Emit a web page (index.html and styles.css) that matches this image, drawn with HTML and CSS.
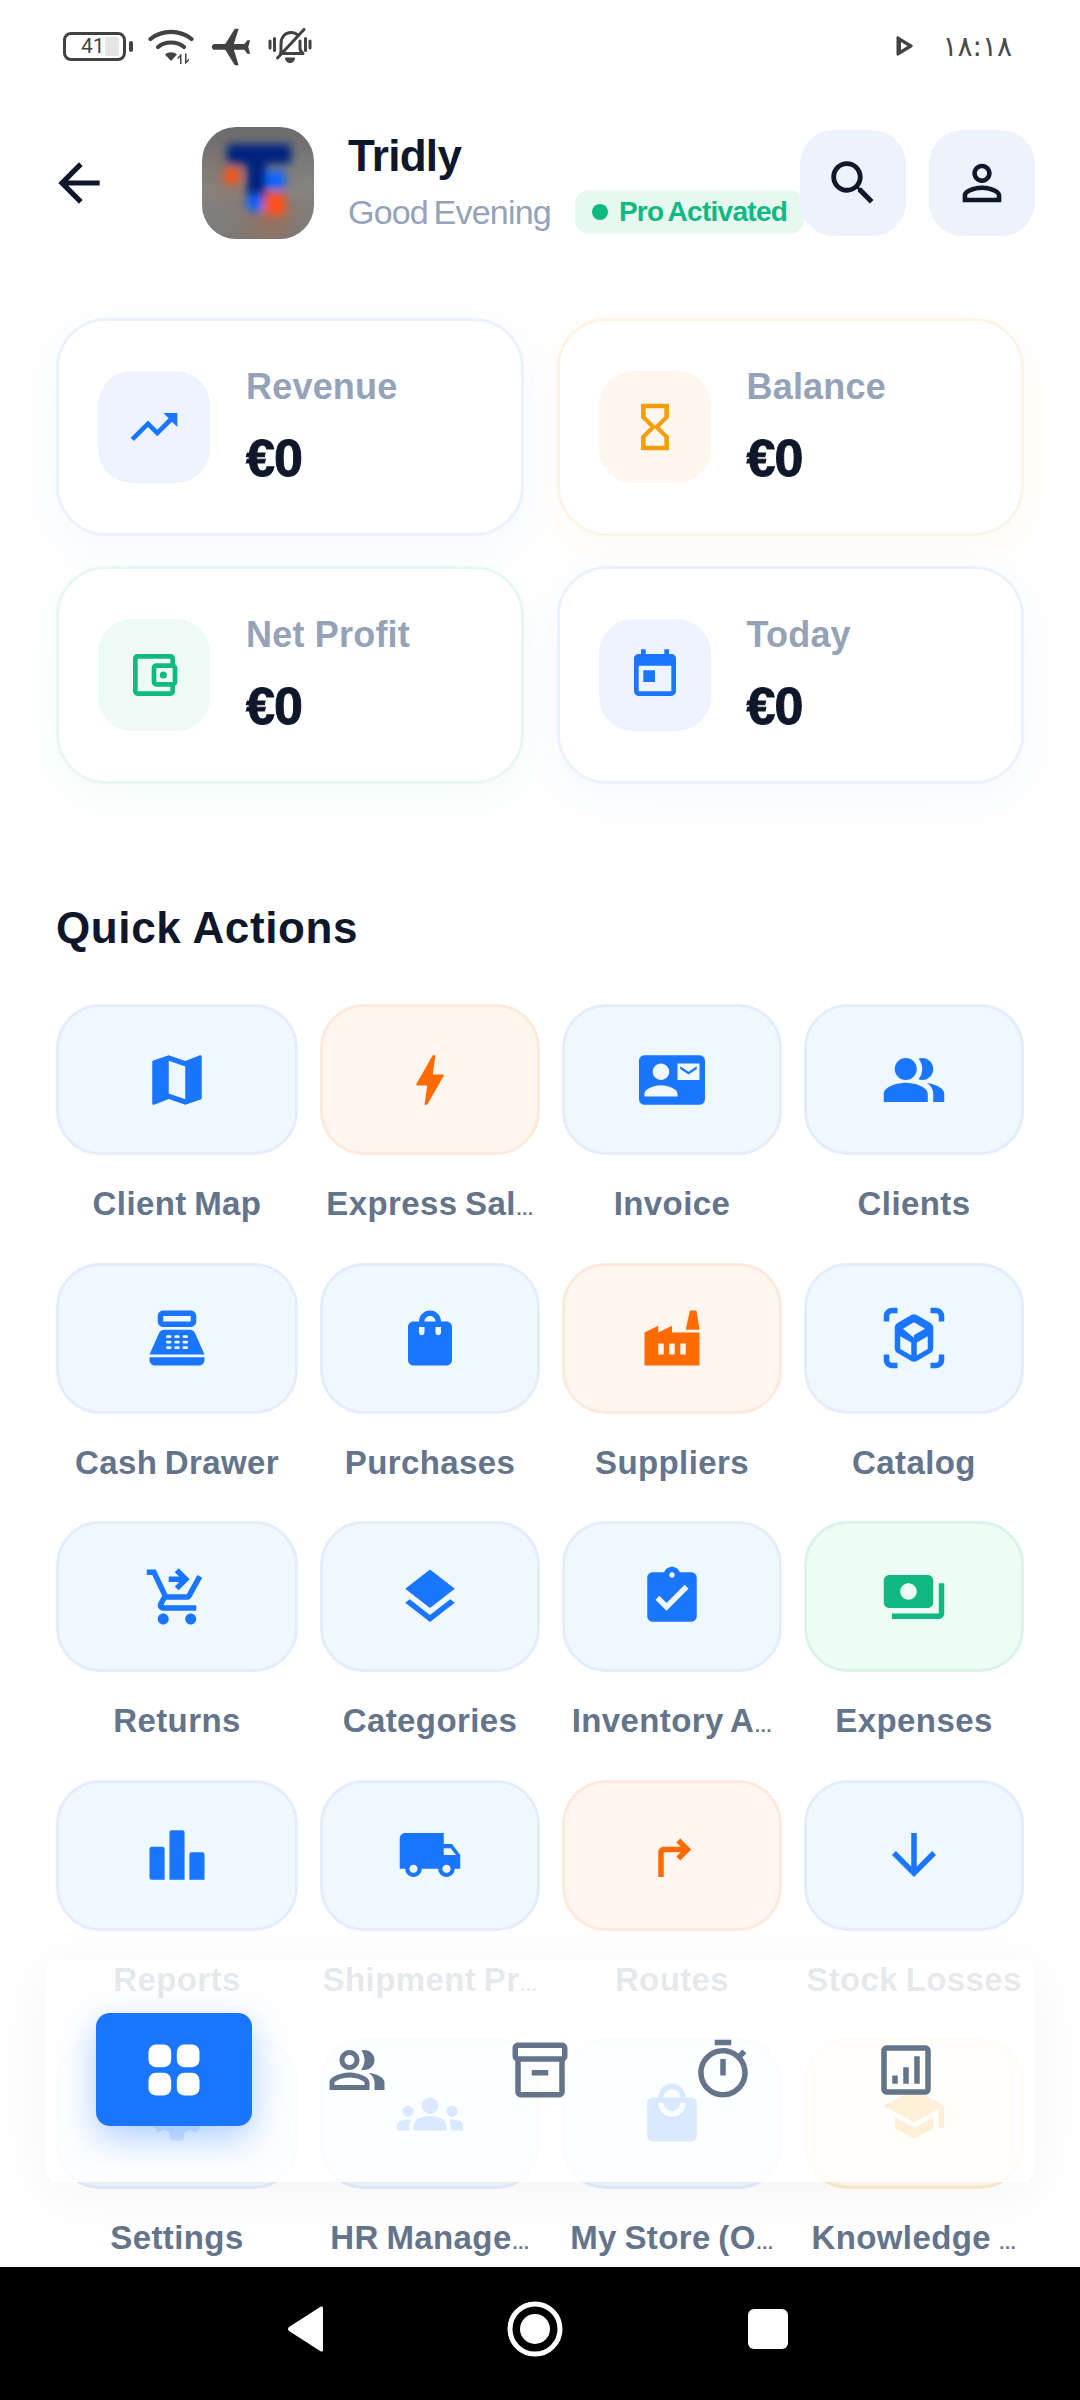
FILE: index.html
```html
<!DOCTYPE html>
<html lang="en">
<head>
    <meta charset="UTF-8">
    <meta name="viewport" content="width=device-width, initial-scale=1.0">
    <title>Tridly</title>
    <link rel="stylesheet" href="styles.css">
</head>
<body>
    <div class="screen">
        <!-- Status bar -->
        <div class="status-bar">
            <div class="status-left">
                <div class="battery"><span class="battery-fill"></span><span class="battery-num">41</span></div>
                <svg class="st-wifi" viewBox="0 0 46 36"><g fill="none" stroke="currentColor" stroke-width="4.200" stroke-linecap="round"><path d="M2.500 11C14 1.500 32 1.500 43.500 11"/><path d="M10 19C17 13 29 13 36 19"/></g><path d="M17 26.500C20.500 23.500 25.500 23.500 29 26.500L23 33Z"/><path d="M32 36v-7l-2.500 2.500V29.500L33.500 25.500V36zM37 25.500h1.500V33L41 30.500V32.500L37 36.500z"/></svg>
                <svg class="st-plane" viewBox="0 0 24 24"><path d="M21 16v-2l-8-5V3.500c0-.83-.67-1.500-1.500-1.500S10 2.670 10 3.500V9l-8 5v2l8-2.500V19l-2 1.500V22l3.500-1 3.500 1v-1.500L13 19v-5.500l8 2.500z" transform="rotate(-90 12 12)"/></svg>
                <svg class="st-bell" viewBox="0 0 44 36"><g fill="none" stroke="currentColor" stroke-width="3" stroke-linecap="round" stroke-linejoin="round"><path d="M13 24.500V16C13 9 17 4.500 23 4.500c3 0 5.500 1 7 3"/><path d="M32 13v7c0 2.500 1 4 3 5.500H12.500"/><path d="M36 1.500 9.500 30"/><path d="M2 13v7M6.500 10.500v12M37.500 10.500v12M42 13v7"/></g><path d="M17 29.500h10c0 3-2 5.500-5 5.500s-5-2.500-5-5.500z"/></svg>
            </div>
            <div class="status-right">
                <svg class="st-play" viewBox="0 0 17 20"><path d="M0.500 1.500C0.500 .5 1.500 0 2.400 .5L16 8.800c1 .6 1 1.800 0 2.400L2.400 19.500C1.500 20 .5 19.500 .5 18.500z"/><path d="M5 6 11.500 10 5 14z" fill="#fff"/></svg>
                <span class="clock">۱۸:۱۸</span>
            </div>
        </div>

        <!-- Header -->
        <div class="header">
            <svg class="back" viewBox="0 0 24 24"><path d="M20 11H7.830l5.590-5.590L12 4l-8 8 8 8 1.410-1.410L7.830 13H20v-2z"/></svg>
            <svg class="logo" viewBox="0 0 112 112">
                <defs>
                    <filter id="soft" x="-30%" y="-30%" width="160%" height="160%"><feGaussianBlur stdDeviation="4"/></filter>
                    <filter id="softer" x="-60%" y="-60%" width="220%" height="220%"><feGaussianBlur stdDeviation="14"/></filter>
                    <linearGradient id="logo-bg" x1="0" y1="0" x2="0" y2="1">
                        <stop offset="0" stop-color="#6b6b6d"/>
                        <stop offset="0.55" stop-color="#858583"/>
                        <stop offset="1" stop-color="#7c7a78"/>
                    </linearGradient>
                </defs>
                <rect width="112" height="112" fill="url(#logo-bg)"/>
                <circle cx="68" cy="90" r="22" fill="#b2603a" opacity="0.55" filter="url(#softer)"/>
                <circle cx="30" cy="50" r="18" fill="#b2603a" opacity="0.45" filter="url(#softer)"/>
                <g filter="url(#soft)">
                    <rect x="25" y="17" width="64" height="20" rx="3" fill="#04247f"/>
                    <rect x="45" y="30" width="19" height="42" fill="#04247f"/>
                    <circle cx="53" cy="76" r="9" fill="#0d62ff"/>
                    <rect x="64" y="44" width="19" height="18" rx="2" fill="#0a63ff"/>
                    <circle cx="30" cy="49" r="8" fill="#ff5210"/>
                    <rect x="63" y="66" width="20" height="22" rx="4" fill="#ff4f14"/>
                </g>
            </svg>
            <div class="brand">
                <div class="brand-name">Tridly</div>
                <div class="brand-sub">
                    <span class="greeting">Good Evening</span>
                    <span class="pro-badge"><span class="pro-dot"></span>Pro Activated</span>
                </div>
            </div>
            <div class="head-btn">
                <svg viewBox="0 0 24 24"><path d="M15.500 14h-.79l-.28-.27C15.410 12.590 16 11.110 16 9.500 16 5.910 13.090 3 9.500 3S3 5.910 3 9.500 5.910 16 9.500 16c1.610 0 3.090-.59 4.230-1.570l.27.28v.79l5 4.990L20.490 19l-4.990-5zm-6 0C7.010 14 5 11.990 5 9.500S7.010 5 9.500 5 14 7.010 14 9.500 11.990 14 9.500 14z"/></svg>
            </div>
            <div class="head-btn">
                <svg viewBox="0 0 24 24"><path d="M12 5.900c1.160 0 2.100.94 2.100 2.100s-.94 2.100-2.100 2.100S9.900 9.160 9.900 8s.94-2.100 2.100-2.100m0 9c2.970 0 6.100 1.460 6.100 2.100v1.100H5.900V17c0-.64 3.130-2.100 6.100-2.100M12 4C9.790 4 8 5.790 8 8s1.790 4 4 4 4-1.790 4-4-1.790-4-4-4zm0 9c-2.670 0-8 1.340-8 4v3h16v-3c0-2.660-5.330-4-8-4z"/></svg>
            </div>
        </div>

        <div class="content">
            <!-- Stat cards -->
            <div class="stats">
                <div class="stat-card">
                    <div class="stat-icon"><svg viewBox="0 0 24 24"><path d="M16 6l2.290 2.290-4.880 4.880-4-4L2 16.590 3.410 18l6-6 4 4 6.300-6.290L22 12V6z"/></svg></div>
                    <div class="stat-text"><div class="stat-label">Revenue</div><div class="stat-value">€0</div></div>
                </div>
                <div class="stat-card amber">
                    <div class="stat-icon"><svg viewBox="0 0 24 24"><path d="M6 2v6h.01L6 8.010 10 12l-4 4 .01.01H6V22h12v-5.990h-.01L18 16l-4-4 4-3.990-.01-.01H18V2H6zm10 14.500V20H8v-3.500l4-4 4 4zm-4-5l-4-4V4h8v3.500l-4 4z"/></svg></div>
                    <div class="stat-text"><div class="stat-label">Balance</div><div class="stat-value">€0</div></div>
                </div>
                <div class="stat-card green">
                    <div class="stat-icon"><svg viewBox="0 0 24 24"><path d="M21 7.280V5c0-1.100-.9-2-2-2H5c-1.110 0-2 .9-2 2v14c0 1.100.89 2 2 2h14c1.100 0 2-.9 2-2v-2.280c.59-.35 1-.98 1-1.720V9c0-.74-.41-1.380-1-1.720zM20 9v6h-7V9h7zM5 19V5h14v2h-6c-1.100 0-2 .9-2 2v6c0 1.100.9 2 2 2h6v2H5z"/><circle cx="16" cy="12" r="1.500"/></svg></div>
                    <div class="stat-text"><div class="stat-label">Net Profit</div><div class="stat-value">€0</div></div>
                </div>
                <div class="stat-card">
                    <div class="stat-icon"><svg viewBox="0 0 24 24"><path d="M19 3h-1V1h-2v2H8V1H6v2H5c-1.110 0-1.990.9-1.990 2L3 19c0 1.100.89 2 2 2h14c1.100 0 2-.9 2-2V5c0-1.100-.9-2-2-2zm0 16H5V8h14v11zM7 10h5v5H7z"/></svg></div>
                    <div class="stat-text"><div class="stat-label">Today</div><div class="stat-value">€0</div></div>
                </div>
            </div>

            <h2 class="section-title">Quick Actions</h2>

            <!-- Quick action tiles -->
            <div class="actions">
                <div class="action">
                    <div class="tile"><svg viewBox="0 0 24 24"><path d="M20.500 3l-.16.03L15 5.100 9 3 3.360 4.900c-.21.07-.36.25-.36.48V20.500c0 .28.22.5.5.5l.16-.03L9 18.900l6 2.100 5.640-1.900c.21-.07.36-.25.36-.48V3.500c0-.28-.22-.5-.5-.5zM15 19l-6-2.110V5l6 2.110V19z"/></svg></div>
                    <div class="action-label">Client Map</div>
                </div>
                <div class="action orange">
                    <div class="tile"><svg viewBox="0 0 24 24"><path d="M11 21h-1l1-7H7.500c-.58 0-.57-.32-.38-.66.19-.34.05-.08.07-.12C8.480 10.940 10.420 7.540 13 3h1l-1 7h3.500c.49 0 .56.33.47.51l-.07.15C12.960 17.550 11 21 11 21z"/></svg></div>
                    <div class="action-label">Express Sal<span class="more">…</span></div>
                </div>
                <div class="action">
                    <div class="tile"><svg viewBox="0 0 24 24"><path d="M21 8V7l-3 2-3-2v1l3 2 3-2zm1-5H2C.9 3 0 3.900 0 5v14c0 1.100.9 2 2 2h20c1.100 0 1.990-.9 1.990-2L24 5c0-1.100-.9-2-2-2zM8 6c1.660 0 3 1.340 3 3s-1.340 3-3 3-3-1.340-3-3 1.340-3 3-3zm6 12H2v-1c0-2 4-3.100 6-3.100s6 1.100 6 3.100v1zm8-6h-8V6h8v6z"/></svg></div>
                    <div class="action-label">Invoice</div>
                </div>
                <div class="action">
                    <div class="tile"><svg viewBox="0 0 24 24"><path d="M16.670 13.130C18.040 14.060 19 15.320 19 17v3h4v-3c0-2.180-3.570-3.470-6.330-3.870z"/><circle cx="9" cy="8" r="4"/><path d="M15 12c2.210 0 4-1.790 4-4s-1.790-4-4-4c-.47 0-.91.1-1.330.24C14.500 5.270 15 6.580 15 8s-.5 2.730-1.330 3.760c.42.14.86.24 1.330.24zM9 13c-2.670 0-8 1.340-8 4v3h16v-3c0-2.660-5.330-4-8-4z"/></svg></div>
                    <div class="action-label">Clients</div>
                </div>

                <div class="action">
                    <div class="tile"><svg viewBox="0 0 24 24"><path fill-rule="evenodd" d="M17 2H7c-1.100 0-2 .9-2 2v2c0 1.100.9 2 2 2h10c1.100 0 2-.9 2-2V4c0-1.100-.9-2-2-2zm0 4H7V4h10v2zm3 16H4c-1.100 0-2-.9-2-2v-1h20v1c0 1.100-.9 2-2 2zM18.530 10.190C18.210 9.470 17.490 9 16.700 9H7.300c-.79 0-1.510.47-1.830 1.190L2 18h20l-3.470-7.810zM8.500 11h1a.5.5 0 0 1 0 1h-1a.5.5 0 0 1 0-1zm3 0h1a.5.5 0 0 1 0 1h-1a.5.5 0 0 1 0-1zm3 0h1a.5.5 0 0 1 0 1h-1a.5.5 0 0 1 0-1zm-6 2h1a.5.5 0 0 1 0 1h-1a.5.5 0 0 1 0-1zm3 0h1a.5.5 0 0 1 0 1h-1a.5.5 0 0 1 0-1zm3 0h1a.5.5 0 0 1 0 1h-1a.5.5 0 0 1 0-1zm-6 2h1a.5.5 0 0 1 0 1h-1a.5.5 0 0 1 0-1zm3 0h1a.5.5 0 0 1 0 1h-1a.5.5 0 0 1 0-1zm3 0h1a.5.5 0 0 1 0 1h-1a.5.5 0 0 1 0-1z"/></svg></div>
                    <div class="action-label">Cash Drawer</div>
                </div>
                <div class="action">
                    <div class="tile"><svg viewBox="0 0 24 24"><path d="M18 6h-2c0-2.210-1.790-4-4-4S8 3.790 8 6H6c-1.100 0-2 .9-2 2v12c0 1.100.9 2 2 2h12c1.100 0 2-.9 2-2V8c0-1.100-.9-2-2-2zm-8 4c0 .55-.45 1-1 1s-1-.45-1-1V8h2v2zm2-6c1.100 0 2 .9 2 2h-4c0-1.100.9-2 2-2zm4 6c0 .55-.45 1-1 1s-1-.45-1-1V8h2v2z"/></svg></div>
                    <div class="action-label">Purchases</div>
                </div>
                <div class="action orange">
                    <div class="tile"><svg viewBox="0 0 24 24"><path fill-rule="evenodd" d="M22 22H2V10l5-2.500V10l5-2.500V10h10v12zM18.500 2h2c.3 0 .5.2.5.5L22 9h-5l1.500-7zM7 14v4h2v-4H7zm4 0v4h2v-4h-2zm4 0v4h2v-4h-2z"/></svg></div>
                    <div class="action-label">Suppliers</div>
                </div>
                <div class="action">
                    <div class="tile"><svg viewBox="0 0 24 24"><path d="M3 4c0-.55.45-1 1-1h2V1H4C2.340 1 1 2.340 1 4v2h2V4zm0 16v-2H1v2c0 1.660 1.340 3 3 3h2v-2H4c-.55 0-1-.45-1-1zM20 1h-2v2h2c.55 0 1 .45 1 1v2h2V4c0-1.660-1.340-3-3-3zm1 19c0 .55-.45 1-1 1h-2v2h2c1.660 0 3-1.340 3-3v-2h-2v2zm-2-4.270V8.270c0-.72-.38-1.380-1-1.740l-5-2.890c-.31-.18-.65-.27-1-.27s-.69.09-1 .27L6 6.530c-.62.36-1 1.020-1 1.740v7.460c0 .72.38 1.380 1 1.740l5 2.890c.31.18.65.27 1 .27s.69-.09 1-.27l5-2.890c.62-.36 1-1.020 1-1.740zm-8 2.580l-4-2.310v-4.640l4 2.320v4.630zm1-6.360L8 8.610l4-2.310 4 2.310-4 2.340zm5 4.050l-4 2.310v-4.630l4-2.320V15z"/></svg></div>
                    <div class="action-label">Catalog</div>
                </div>

                <div class="action">
                    <div class="tile"><svg viewBox="0 0 24 24"><path d="M7 18c-1.100 0-1.990.9-1.990 2S5.900 22 7 22s2-.9 2-2-.9-2-2-2zm10 0c-1.100 0-1.990.9-1.990 2s.89 2 1.990 2 2-.9 2-2-.9-2-2-2zm-9.830-3.250l.03-.12.9-1.630h7.450c.75 0 1.410-.41 1.750-1.030l3.860-7.010L19.420 4h-.01l-1.100 2-2.760 5H8.530l-.13-.27L6.160 6l-.95-2-.94-2H1v2h2l3.600 7.590-1.350 2.450c-.16.28-.25.61-.25.960 0 1.100.9 2 2 2h12v-2H7.420c-.13 0-.25-.11-.25-.25zM12.590 1.590 11.180 3l1.590 1.590H9v2h3.770L11.180 8.180l1.410 1.410L16.590 5.590z"/></svg></div>
                    <div class="action-label">Returns</div>
                </div>
                <div class="action">
                    <div class="tile"><svg viewBox="0 0 24 24"><path d="M11.990 18.540l-7.370-5.730L3 14.070l9 7 9-7-1.630-1.270-7.380 5.740zM12 16l7.360-5.730L21 9l-9-7-9 7 1.630 1.270L12 16z"/></svg></div>
                    <div class="action-label">Categories</div>
                </div>
                <div class="action">
                    <div class="tile"><svg viewBox="0 0 24 24"><path d="M19 3h-4.180C14.400 1.840 13.300 1 12 1c-1.300 0-2.400.84-2.820 2H5c-1.100 0-2 .9-2 2v14c0 1.100.9 2 2 2h14c1.100 0 2-.9 2-2V5c0-1.100-.9-2-2-2zm-7 0c.55 0 1 .45 1 1s-.45 1-1 1-1-.45-1-1 .45-1 1-1zm-2 14l-4-4 1.410-1.410L10 14.170l6.590-6.590L18 9l-8 8z"/></svg></div>
                    <div class="action-label">Inventory A<span class="more">…</span></div>
                </div>
                <div class="action green">
                    <div class="tile"><svg viewBox="0 0 24 24"><path d="M19 14V6c0-1.100-.9-2-2-2H3c-1.100 0-2 .9-2 2v8c0 1.100.9 2 2 2h14c1.100 0 2-.9 2-2zm-9-1c-1.660 0-3-1.340-3-3s1.340-3 3-3 3 1.340 3 3-1.340 3-3 3zm13-6v11c0 1.100-.9 2-2 2H4v-2h17V7h2z"/></svg></div>
                    <div class="action-label">Expenses</div>
                </div>

                <div class="action">
                    <div class="tile"><svg viewBox="0 0 24 24"><path d="M7.500 21H2.800a.8.8 0 0 1-.8-.8V9.800a.8.8 0 0 1 .8-.8h3.900a.8.8 0 0 1 .8.8V21zm7.250 0h-5.500V3.800a.8.8 0 0 1 .8-.8h3.900a.8.8 0 0 1 .8.8V21zM22 21h-5.500V11.800a.8.8 0 0 1 .8-.8h3.900a.8.8 0 0 1 .8.8V21z"/></svg></div>
                    <div class="action-label">Reports</div>
                </div>
                <div class="action">
                    <div class="tile"><svg viewBox="0 0 24 24"><path d="M20 8h-3V4H3c-1.100 0-2 .9-2 2v11h2c0 1.660 1.340 3 3 3s3-1.340 3-3h6c0 1.660 1.340 3 3 3s3-1.340 3-3h2v-5l-3-4zM6 18.500c-.83 0-1.500-.67-1.500-1.500s.67-1.500 1.500-1.500 1.500.67 1.500 1.500-.67 1.500-1.500 1.500zm13.500-9l1.960 2.500H17V9.500h2.500zm-1.500 9c-.83 0-1.500-.67-1.500-1.500s.67-1.500 1.500-1.500 1.500.67 1.500 1.500-.67 1.500-1.500 1.500z"/></svg></div>
                    <div class="action-label">Shipment Pr<span class="more">…</span></div>
                </div>
                <div class="action orange">
                    <div class="tile"><svg viewBox="0 0 24 24"><path d="M7 20v-9c0-1.100.9-2 2-2h6.170l-1.590-1.590L15 6l4 4-4 4-1.410-1.410L15.170 11H9v9z"/></svg></div>
                    <div class="action-label">Routes</div>
                </div>
                <div class="action">
                    <div class="tile"><svg viewBox="0 0 24 24"><path d="M20 12l-1.410-1.410L13 16.170V4h-2v12.170l-5.580-5.590L4 12l8 8 8-8z"/></svg></div>
                    <div class="action-label">Stock Losses</div>
                </div>

                <div class="action">
                    <div class="tile"><svg viewBox="0 0 24 24"><path d="M19.140 12.940c.04-.3.060-.61.060-.94 0-.32-.02-.64-.07-.94l2.030-1.580c.18-.14.23-.41.120-.61l-1.920-3.320c-.12-.22-.37-.29-.59-.22l-2.390.96c-.5-.38-1.030-.7-1.620-.94l-.36-2.540c-.04-.24-.24-.41-.48-.41h-3.840c-.24 0-.43.17-.47.41l-.36 2.540c-.59.24-1.130.57-1.620.94l-2.390-.96c-.22-.08-.47 0-.59.22L2.740 8.870c-.12.21-.08.47.12.61l2.030 1.580c-.05.3-.09.63-.09.94s.02.64.07.94l-2.030 1.580c-.18.14-.23.41-.12.61l1.920 3.320c.12.22.37.29.59.22l2.390-.96c.5.38 1.030.7 1.620.94l.36 2.540c.05.24.24.41.48.41h3.840c.24 0 .44-.17.47-.41l.36-2.540c.59-.24 1.130-.56 1.620-.94l2.390.96c.22.08.47 0 .59-.22l1.920-3.320c.12-.22.070-.47-.12-.61l-2.010-1.580zM12 15.600c-1.980 0-3.600-1.620-3.600-3.600s1.620-3.600 3.600-3.600 3.600 1.620 3.600 3.600-1.620 3.600-3.600 3.600z"/></svg></div>
                    <div class="action-label">Settings</div>
                </div>
                <div class="action">
                    <div class="tile"><svg viewBox="0 0 24 24"><path d="M12 12.750c1.630 0 3.070.39 4.240.9 1.080.48 1.760 1.560 1.760 2.730V18H6v-1.610c0-1.180.68-2.260 1.760-2.730 1.170-.52 2.610-.91 4.240-.91zM4 13c1.100 0 2-.9 2-2s-.9-2-2-2-2 .9-2 2 .9 2 2 2zm1.130 1.100c-.37-.06-.74-.1-1.130-.1-.99 0-1.930.21-2.780.58C.48 14.900 0 15.620 0 16.430V18h4.500v-1.610c0-.83.23-1.610.63-2.290zM20 13c1.100 0 2-.9 2-2s-.9-2-2-2-2 .9-2 2 .9 2 2 2zm4 3.430c0-.81-.48-1.530-1.220-1.850-.85-.37-1.790-.58-2.780-.58-.39 0-.76.04-1.130.1.4.68.63 1.460.63 2.290V18H24v-1.570zM12 6c1.660 0 3 1.340 3 3s-1.340 3-3 3-3-1.340-3-3 1.340-3 3-3z"/></svg></div>
                    <div class="action-label">HR Manage<span class="more">…</span></div>
                </div>
                <div class="action">
                    <div class="tile"><svg viewBox="0 0 24 24"><path d="M19 6h-2c0-2.760-2.240-5-5-5S7 3.240 7 6H5c-1.100 0-1.990.9-1.990 2L3 20c0 1.100.9 2 2 2h14c1.100 0 2-.9 2-2V8c0-1.100-.9-2-2-2zm-7-3c1.660 0 3 1.340 3 3H9c0-1.660 1.340-3 3-3zm0 10c-2.760 0-5-2.240-5-5h2c0 1.660 1.340 3 3 3s3-1.340 3-3h2c0 2.760-2.240 5-5 5z"/></svg></div>
                    <div class="action-label">My Store (O<span class="more">…</span></div>
                </div>
                <div class="action amber">
                    <div class="tile"><svg viewBox="0 0 24 24"><path d="M5 13.180v4L12 21l7-3.820v-4L12 17l-7-3.820zM12 3L1 9l11 6 9-4.910V17h2V9L12 3z"/></svg></div>
                    <div class="action-label">Knowledge <span class="more">…</span></div>
                </div>
            </div>
        </div>

        <!-- Android navigation -->
        <div class="system-nav">
            <svg class="sys-back" viewBox="0 0 38 48"><path d="M36 3v42c0 1.500-1.200 2-2.400 1.200L2 26c-1.300-1-1.300-3 0-4L33.600 1.800C34.800 1 36 1.500 36 3z"/></svg>
            <svg class="sys-home" viewBox="0 0 56 56"><circle cx="28" cy="28" r="25" fill="none" stroke="#fff" stroke-width="5"/><circle cx="28" cy="28" r="15" fill="#fff"/></svg>
            <div class="sys-square"></div>
        </div>

        <div class="tab-bar">
            <div class="tab active">
                <svg viewBox="0 0 24 24"><rect x="3" y="3" width="8" height="8" rx="2.600"/><rect x="13" y="3" width="8" height="8" rx="2.600"/><rect x="3" y="13" width="8" height="8" rx="2.600"/><rect x="13" y="13" width="8" height="8" rx="2.600"/></svg>
            </div>
            <div class="tab">
                <svg class="tab-people" viewBox="0 0 24 24"><path d="M16.670 13.130C18.040 14.060 19 15.320 19 17v3h4v-3c0-2.180-3.570-3.470-6.330-3.870zM15 12c2.210 0 4-1.790 4-4s-1.790-4-4-4c-.47 0-.91.1-1.330.24C14.500 5.270 15 6.580 15 8s-.5 2.730-1.330 3.760c.42.14.86.24 1.330.24zM9 12c2.210 0 4-1.790 4-4s-1.790-4-4-4-4 1.790-4 4 1.790 4 4 4zm0-6c1.100 0 2 .9 2 2s-.9 2-2 2-2-.9-2-2 .9-2 2-2zM9 13c-2.670 0-8 1.340-8 4v3h16v-3c0-2.660-5.330-4-8-4zm6 5H3v-.99C3.200 16.290 6.300 15 9 15s5.800 1.290 6 2v1z"/></svg>
            </div>
            <div class="tab">
                <svg viewBox="0 0 24 24"><path d="M20 2H4c-1 0-2 .9-2 2v3.010c0 .72.43 1.340 1 1.690V20c0 1.100 1.100 2 2 2h14c.9 0 2-.9 2-2V8.700c.57-.35 1-.97 1-1.690V4c0-1.100-1-2-2-2zm-1 18H5V9h14v11zm1-13H4V4h16v3zM9 12h6v2H9z"/></svg>
            </div>
            <div class="tab">
                <svg viewBox="0 0 24 24"><path d="M15 1H9v2h6V1zm-4 13h2V8h-2v6zm8.030-6.610l1.420-1.420c-.43-.51-.9-.99-1.410-1.410l-1.420 1.420C16.070 4.740 14.120 4 12 4c-4.970 0-9 4.030-9 9s4.020 9 9 9 9-4.030 9-9c0-2.120-.74-4.070-1.970-5.610zM12 20c-3.870 0-7-3.130-7-7s3.130-7 7-7 7 3.130 7 7-3.130 7-7 7z"/></svg>
            </div>
            <div class="tab">
                <svg viewBox="0 0 24 24"><path d="M19 3H5c-1.100 0-2 .9-2 2v14c0 1.100.9 2 2 2h14c1.100 0 2-.9 2-2V5c0-1.100-.9-2-2-2zm0 16H5V5h14v14zM7 14h2v3H7zm4-3h2v6h-2zm4-4h2v10h-2z"/></svg>
            </div>
        </div>
    </div>
</body>
</html>
```

FILE: styles.css
```css
* {
    box-sizing: border-box;
}

body {
    margin: 0;
    background-color: #ffffff;
    font-family: "Liberation Sans", Arial, sans-serif;
}

svg {
    display: block;
    fill: currentColor;
}

.screen {
    position: relative;
    display: flex;
    flex-direction: column;
    width: 1080px;
    height: 2400px;
    overflow: hidden;
    background-color: #ffffff;
}

/* Status bar */
.status-bar {
    display: flex;
    justify-content: space-between;
    align-items: center;
    flex: none;
    height: 92px;
    padding: 0 68px 0 63px;
    color: #424242;
}

.status-left,
.status-right {
    display: flex;
    align-items: center;
}

.battery {
    position: relative;
    width: 63px;
    height: 29px;
    border: 3px solid #424242;
    border-radius: 8px;
    margin-right: 22px;
    padding-left: 15px;
    display: flex;
    align-items: center;
}

.battery::after {
    content: "";
    position: absolute;
    right: -10px;
    top: 6px;
    width: 4px;
    height: 11px;
    border-radius: 2px;
    background-color: #424242;
}

.battery-fill {
    position: absolute;
    top: 2px;
    bottom: 2px;
    left: 39px;
    width: 14px;
    background-color: #e4e4e4;
    border-radius: 2px;
}

.battery-num {
    position: relative;
    font-family: Roboto, sans-serif;
    font-size: 21px;
    line-height: 1;
}

.st-wifi {
    width: 46px;
    height: 36px;
    margin-right: 14px;
}

.st-plane {
    width: 46px;
    height: 46px;
    margin-right: 14px;
}

.st-bell {
    width: 44px;
    height: 36px;
}

.st-play {
    width: 17px;
    height: 20px;
    margin-right: 29px;
}

.clock {
    font-family: "DejaVu Sans", sans-serif;
    font-size: 28px;
    letter-spacing: -1px;
    color: #4a4a4a;
}

/* Header */
.header {
    display: flex;
    align-items: center;
    flex: none;
    height: 112px;
    margin-top: 35px;
    padding: 0 45px 0 48px;
}

.back {
    flex: none;
    width: 62px;
    height: 62px;
    margin-right: 92px;
    color: #0f172a;
}

.logo {
    flex: none;
    width: 112px;
    height: 112px;
    border-radius: 34px;
    margin-right: 34px;
}

.brand {
    flex: 1;
    min-width: 0;
}

.brand-name {
    margin-top: -2px;
    font-size: 44px;
    font-weight: 700;
    line-height: 52px;
    letter-spacing: -0.7px;
    color: #0f172a;
}

.brand-sub {
    display: flex;
    align-items: center;
    margin-top: 8px;
    white-space: nowrap;
}

.greeting {
    font-size: 34px;
    letter-spacing: -0.8px;
    word-spacing: -3px;
    color: #94a3b8;
    margin-right: 24px;
}

.pro-badge {
    display: flex;
    align-items: center;
    flex: none;
    height: 44px;
    padding: 0 17px;
    background-color: #e7f8f1;
    border-radius: 14px;
    font-size: 28px;
    font-weight: 700;
    letter-spacing: -0.7px;
    word-spacing: -2px;
    color: #10b981;
}

.pro-dot {
    width: 16px;
    height: 16px;
    border-radius: 50%;
    background-color: #10b981;
    margin-right: 11px;
}

.head-btn {
    display: flex;
    justify-content: center;
    align-items: center;
    flex: none;
    width: 106px;
    height: 106px;
    margin-left: 23px;
    background-color: #edf3fd;
    border-radius: 34px;
    color: #0f172a;
}

.head-btn svg {
    width: 58px;
    height: 58px;
}

/* Scrolling area */
.content {
    flex: 1;
    min-height: 0;
    overflow: hidden;
    padding: 0 56px;
}

.stats {
    display: grid;
    grid-template-columns: 1fr 1fr;
    gap: 30px 33px;
    margin-top: 79px;
}

.stat-card {
    display: flex;
    align-items: flex-start;
    height: 218px;
    padding: 50px 39px;
    background-color: #ffffff;
    border: 3px solid #ebf2fd;
    border-radius: 50px;
    box-shadow: 0 14px 44px rgba(26, 117, 255, 0.05);
    color: #1a75ff;
}

.stat-card.amber {
    border-color: #fdf3e7;
    box-shadow: 0 14px 44px rgba(245, 158, 11, 0.05);
    color: #f59e0b;
}

.stat-card.green {
    border-color: #e9f7f2;
    box-shadow: 0 14px 44px rgba(16, 185, 129, 0.05);
    color: #10b981;
}

.stat-icon {
    display: flex;
    justify-content: center;
    align-items: center;
    flex: none;
    width: 112px;
    height: 112px;
    margin-right: 36px;
    background-color: #eef4ff;
    border-radius: 34px;
}

.stat-card.amber .stat-icon {
    background-color: #fff7ed;
}

.stat-card.green .stat-icon {
    background-color: #edfaf5;
}

.stat-icon svg {
    width: 56px;
    height: 56px;
}

.stat-text {
    margin-top: -6px;
}

.stat-label {
    font-size: 36px;
    font-weight: 700;
    line-height: 44px;
    letter-spacing: 0.2px;
    color: #94a3b8;
}

.stat-value {
    margin-top: 17px;
    font-size: 52px;
    font-weight: 700;
    line-height: 64px;
    letter-spacing: -1px;
    color: #0f172a;
    -webkit-text-stroke: 1px #0f172a;
}

.section-title {
    margin: 118px 0 0;
    font-size: 44px;
    font-weight: 700;
    line-height: 52px;
    letter-spacing: 0.6px;
    color: #0f172a;
}

.actions {
    display: grid;
    grid-template-columns: 242px repeat(3, 220px);
    gap: 38.5px 22px;
    margin-top: 50px;
}

.action {
    min-width: 0;
    color: #1a75ff;
}

.tile {
    display: flex;
    justify-content: center;
    align-items: center;
    height: 151px;
    background-color: #eff7ff;
    border: 3px solid #e3edfb;
    border-radius: 44px;
}

.action.orange {
    color: #ff6b00;
}

.action.orange .tile {
    background-color: #fff6f0;
    border-color: #fdeadd;
}

.action.green {
    color: #10b981;
}

.action.green .tile {
    background-color: #eefcf6;
    border-color: #dbf3e9;
}

.action.amber {
    color: #f59e0b;
}

.action.amber .tile {
    background-color: #fff8eb;
    border-color: #fcecc9;
}

.tile svg {
    width: 66px;
    height: 66px;
}

.action-label {
    margin-top: 29px;
    font-size: 33px;
    font-weight: 700;
    line-height: 40px;
    letter-spacing: 0.4px;
    word-spacing: -2px;
    text-align: center;
    color: #64748b;
    white-space: nowrap;
}

/* smaller dots on cut-off names, must not grow the line */
.more {
    font-size: 18px;
    line-height: 0;
    letter-spacing: 0;
}

/* Floating tab bar */
.tab-bar {
    position: absolute;
    left: 45px;
    top: 1960px;
    display: flex;
    align-items: flex-start;
    gap: 27px;
    width: 990px;
    height: 222px;
    padding: 53px 51px 0;
    background-color: rgba(255, 255, 255, 0.84);
    border-radius: 14px;
    box-shadow: 0 10px 60px rgba(15, 23, 42, 0.05);
}

.tab {
    display: flex;
    justify-content: center;
    align-items: center;
    flex: none;
    width: 156px;
    height: 113px;
    color: #64748b;
}

.tab svg {
    width: 66px;
    height: 66px;
}

.tab .tab-people {
    width: 60px;
    height: 60px;
}

.tab.active {
    background-color: #1a75ff;
    border-radius: 14px;
    box-shadow: 0 12px 36px rgba(26, 117, 255, 0.35);
    color: #ffffff;
}

.tab.active svg {
    width: 68px;
    height: 68px;
}

/* System navigation bar */
.system-nav {
    display: flex;
    justify-content: center;
    align-items: center;
    flex: none;
    height: 133px;
    padding: 0 5px 9px 0;
    background-color: #000000;
    color: #ffffff;
}

.sys-back {
    width: 38px;
    height: 48px;
}

.sys-home {
    width: 56px;
    height: 56px;
    margin-left: 182px;
}

.sys-square {
    width: 40px;
    height: 40px;
    margin-left: 185px;
    background-color: #ffffff;
    border-radius: 6px;
}
```
